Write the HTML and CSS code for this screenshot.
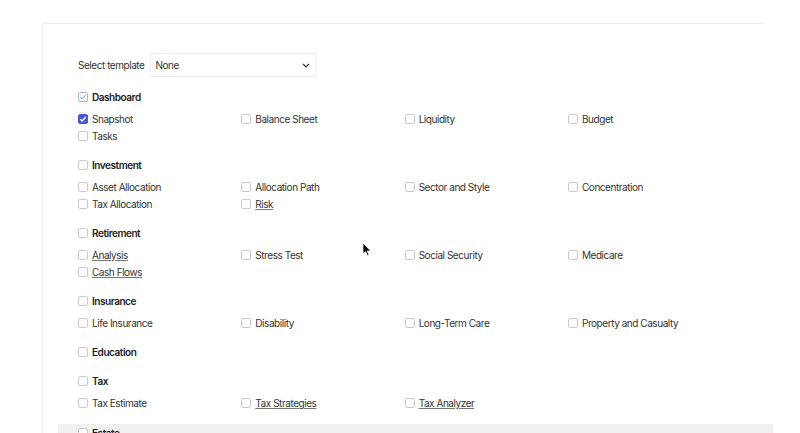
FILE: index.html
```html
<!DOCTYPE html>
<html>
<head>
<meta charset="utf-8">
<link rel="stylesheet" href="styles.css">
</head>
<body>
<div class="card">
  <div class="template-row">
    <span class="template-label">Select template</span>
    <div class="select">
      <span>None</span>
      <svg class="chev" width="8" height="5" viewBox="0 0 8 5"><path d="M1 1l3 3 3-3" fill="none" stroke="#333" stroke-width="1.2"/></svg>
    </div>
  </div>

  <div class="section">
    <div class="head"><span class="cb partial"><svg viewBox="0 0 10 10"><path d="M2.3 5.2l1.8 1.8 3.7-4" fill="none" stroke="#9aa6e6" stroke-width="1.1"/></svg></span>Dashboard</div>
    <div class="items">
      <div class="item"><span class="cb checked"><svg viewBox="0 0 10 10"><path d="M2.3 5.2l1.8 1.8 3.7-4" fill="none" stroke="#fff" stroke-width="1.4"/></svg></span>Snapshot</div>
      <div class="item"><span class="cb"></span>Balance Sheet</div>
      <div class="item"><span class="cb"></span>Liquidity</div>
      <div class="item"><span class="cb"></span>Budget</div>
      <div class="item"><span class="cb"></span>Tasks</div>
    </div>
  </div>

  <div class="section">
    <div class="head"><span class="cb"></span>Investment</div>
    <div class="items">
      <div class="item"><span class="cb"></span>Asset Allocation</div>
      <div class="item"><span class="cb"></span>Allocation Path</div>
      <div class="item"><span class="cb"></span>Sector and Style</div>
      <div class="item"><span class="cb"></span>Concentration</div>
      <div class="item"><span class="cb"></span>Tax Allocation</div>
      <div class="item"><span class="cb"></span><u>Risk</u></div>
    </div>
  </div>

  <div class="section">
    <div class="head"><span class="cb"></span>Retirement</div>
    <div class="items">
      <div class="item"><span class="cb"></span><u>Analysis</u></div>
      <div class="item"><span class="cb"></span>Stress Test</div>
      <div class="item"><span class="cb"></span>Social Security</div>
      <div class="item"><span class="cb"></span>Medicare</div>
      <div class="item"><span class="cb"></span><u>Cash Flows</u></div>
    </div>
  </div>

  <div class="section">
    <div class="head"><span class="cb"></span>Insurance</div>
    <div class="items">
      <div class="item"><span class="cb"></span>Life Insurance</div>
      <div class="item"><span class="cb"></span>Disability</div>
      <div class="item"><span class="cb"></span>Long-Term Care</div>
      <div class="item"><span class="cb"></span>Property and Casualty</div>
    </div>
  </div>

  <div class="section">
    <div class="head"><span class="cb"></span>Education</div>
  </div>

  <div class="section">
    <div class="head"><span class="cb"></span>Tax</div>
    <div class="items">
      <div class="item"><span class="cb"></span>Tax Estimate</div>
      <div class="item"><span class="cb"></span><u>Tax Strategies</u></div>
      <div class="item"><span class="cb"></span><u>Tax Analyzer</u></div>
    </div>
  </div>

  <div class="section estate">
    <div class="head"><span class="cb"></span>Estate</div>
  </div>
</div>
<svg class="cursor" width="10" height="15" viewBox="0 0 10 15"><path d="M1 1v11l2.6-2.4 1.8 4 1.6-.7-1.8-3.9H8.8z" fill="#000" stroke="#fff" stroke-width="0.8"/></svg>
</body>
</html>
```

FILE: styles.css
```css
html, body {
  margin: 0;
  padding: 0;
  background: #fff;
  overflow: hidden;
  height: 433px;
}
body {
  font-family: Inter, "Liberation Sans", sans-serif;
  font-size: 10px;
  letter-spacing: -0.45px;
  color: #333;
  position: relative;
}
.card {
  margin: 23px 0 0 42px;
  width: 723px;
  border-top: 1px solid #ebebeb;
  border-left: 1px solid #f0f0f0;
  padding: 29px 0 0 35px;
  box-sizing: border-box;
}
.template-row {
  display: flex;
  align-items: center;
  height: 24px;
  margin-bottom: 11.5px;
}
.template-label {
  margin-right: 6px;
}
.select {
  width: 167px;
  height: 24px;
  box-sizing: border-box;
  border: 1px solid #eeeeee;
  display: flex;
  align-items: center;
  justify-content: space-between;
  padding: 0 4px 0 4px;
}
.chev { margin-right: 2px; }
.section {
  margin-bottom: 12px;
}
.head {
  height: 17px;
  display: flex;
  align-items: center;
  font-weight: 600;
  color: #222;
}
.items {
  margin-top: 5px;
  display: grid;
  grid-template-columns: repeat(4, 163.33px);
  grid-auto-rows: 17px;
}
.item {
  display: flex;
  align-items: center;
  white-space: nowrap;
}
.item u {
  text-decoration-color: #777;
  text-underline-offset: 1px;
}
.cb {
  width: 10px;
  height: 10px;
  box-sizing: border-box;
  border: 1px solid #cbcbcb;
  border-radius: 2px;
  margin-right: 4px;
  flex: none;
  display: flex;
  background: #fff;
}
.cb svg { width: 100%; height: 100%; }
.cb.checked {
  background: #4558d6;
  border-color: #4558d6;
}
.cb.checked svg { width: 10px; height: 10px; margin: -1px; }
.cb.partial {
  border-color: #aab3e8;
}
.cb.partial svg { width: 10px; height: 10px; margin: -1px; }
.estate {
  margin-left: -20px;
  padding-left: 20px;
  margin-right: -8px;
  background: #f2f0f0;
  padding-top: 1px;
}
.cursor {
  position: absolute;
  left: 362px;
  top: 242px;
}
```
